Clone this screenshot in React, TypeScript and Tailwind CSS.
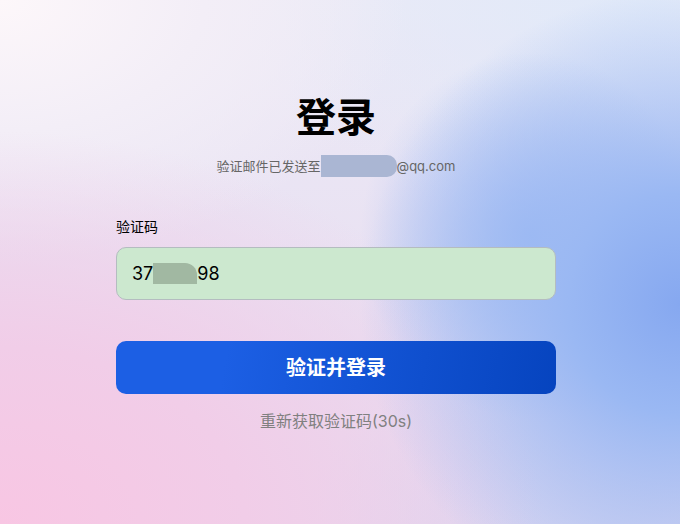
import { useState } from "react";

// 验证码登录页
const App = () => {
  const [code, setCode] = useState("37");

  return (
    <div
      className="flex min-h-screen w-full justify-center bg-[#e9dcef] pr-2 pt-[94px] bg-[radial-gradient(ellipse_47%_60%_at_100%_58%,#86a8f0_0%,#9ab8f3_35%,transparent_100%),radial-gradient(ellipse_25%_35%_at_78%_45%,#a3bdf3_0%,transparent_100%),radial-gradient(ellipse_80%_75%_at_0%_100%,#f8c6e3_0%,#f1cde8_45%,transparent_100%),radial-gradient(ellipse_60%_50%_at_0%_0%,#fdf7fa_0%,#f3eef7_50%,transparent_100%),radial-gradient(ellipse_60%_45%_at_95%_0%,#e0e9f9_0%,transparent_100%),radial-gradient(ellipse_45%_35%_at_90%_100%,#d6d5f1_0%,transparent_100%),linear-gradient(180deg,#eceaf6_0%,#e6d9ef_100%)]"
      style={{ fontFamily: 'Inter, "Noto Sans CJK SC", sans-serif' }}
    >
      <div className="flex w-[440px] flex-col">
        <h1 className="text-center text-[40px] font-bold leading-[48px] text-black">
          登录
        </h1>
        <p className="mt-[7px] text-center text-[13px] leading-5 text-[#666]">
          验证邮件已发送至
          <span className="inline-block h-[22px] w-[76px] translate-y-[6px] rounded-r-[10px] bg-[#aab6d3] align-baseline" />
          @qq.com
        </p>

        {/* 验证码 输入 */}
        <label className="mt-[41px] text-sm leading-5 text-black">验证码</label>
        <div className="mt-[10px] flex h-[53px] items-center rounded-[10px] border border-[#b4bcc0] bg-[#cce8cf] px-[15px]">
          <span className="text-lg text-black">{code.slice(0, 2)}</span>
          <span className="inline-block h-[21px] w-[44px] rounded-tr-[12px] bg-[#a1b8a2]" />
          <span className="text-lg text-black">98</span>
          <input
            className="sr-only"
            value={code}
            onChange={(e) => setCode(e.target.value)}
          />
        </div>

        <button className="mt-[41px] h-[53px] rounded-[10px] bg-[linear-gradient(100deg,#1c5fe4_0%,#1c5fe4_25%,#0644bf_100%)] text-xl font-semibold text-white">
          验证并登录
        </button>

        <p className="mt-[15px] text-center text-base leading-6 text-[#808080]">
          重新获取验证码(30s)
        </p>
      </div>
    </div>
  );
};

export default App;
